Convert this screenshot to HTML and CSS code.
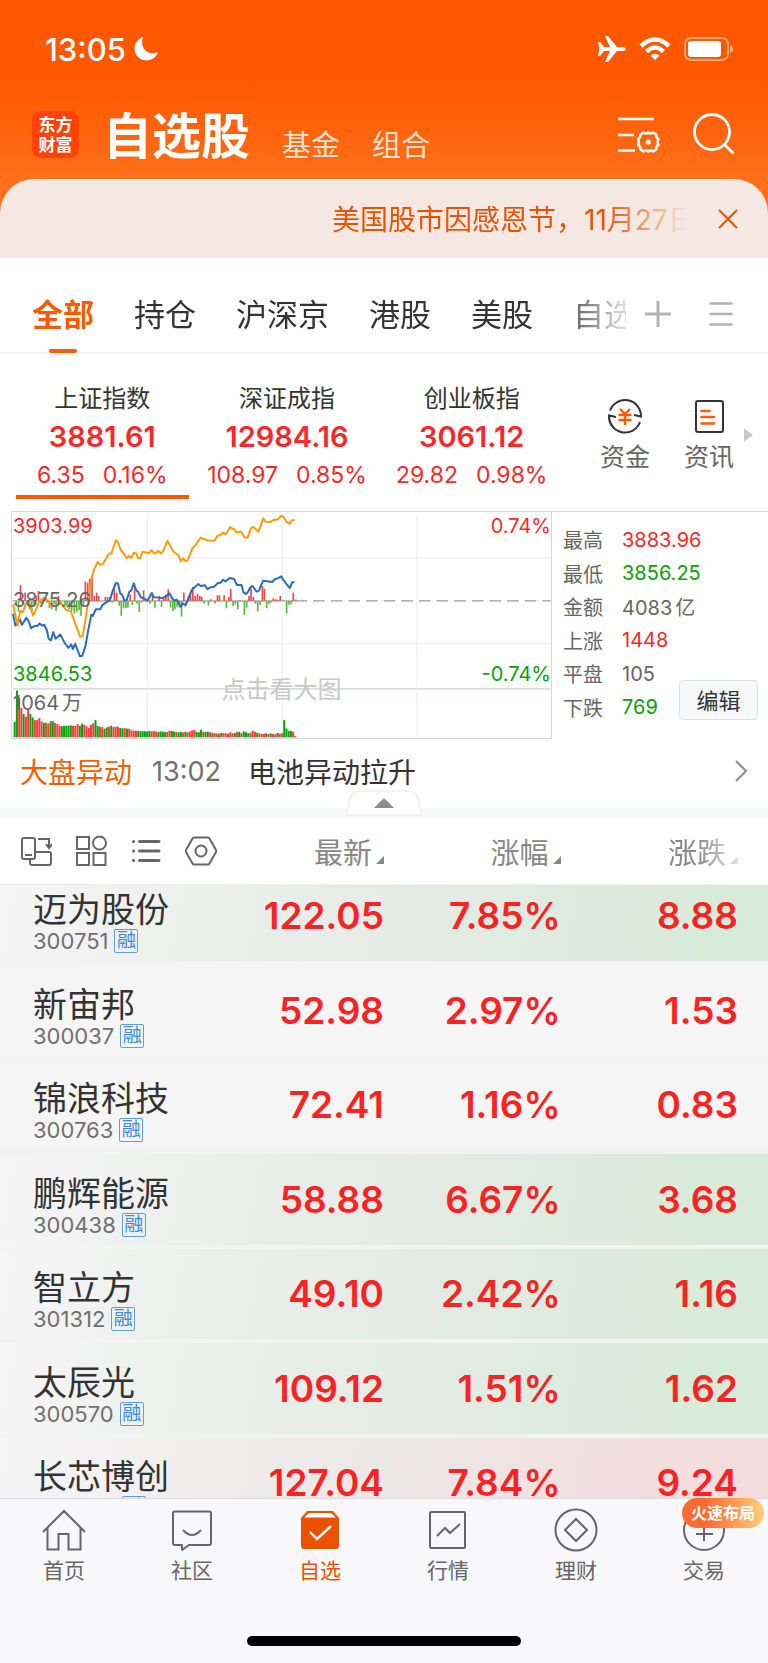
FILE: index.html
```
<!DOCTYPE html>
<html lang="zh-CN">
<head>
    <meta charset="UTF-8">
    <meta name="viewport" content="width=device-width, initial-scale=1.0">
    <title>自选股</title>
    <link rel="stylesheet" href="styles.css">
</head>
<body>
<div class="app">
    <header class="header">
        <div class="status-bar">
            <span class="clock">13:05</span>
            <svg width="24" height="24" viewBox="0 0 24 24"><path fill="#fff" d="M9 0A12 12 0 1 0 24 15C15 19 5 12 9 0z"/></svg>
            <div class="status-icons">
                <svg width="28" height="26" viewBox="0 0 28 26"><path fill="#fff" d="M0 6h2l4 5h6L7 0h3l9 11h5c5 0 5 4 0 4h-5l-9 11H7l5-11H6l-4 5H0l1.500-7z"/></svg>
                <svg width="32" height="24" viewBox="0 0 32 24">
                    <path fill="none" stroke="#fff" stroke-width="4.500" d="M2 9q14-13 28 0M7.500 14.500q8.500-8 17 0"/>
                    <path fill="#fff" d="M11.500 18.500q4.500-3.500 9 0L16 23z"/>
                </svg>
                <svg width="50" height="24" viewBox="0 0 50 24">
                    <rect x="1" y="1" width="43" height="22" rx="6" fill="none" stroke="#fff" stroke-opacity=".45" stroke-width="2"/>
                    <rect x="4" y="4" width="33" height="16" rx="3" fill="#fff"/>
                    <path fill="#fff" fill-opacity=".5" d="M46 8q3 1 3 4t-3 4z"/>
                </svg>
            </div>
        </div>

        <nav class="top-nav">
            <a class="logo" href="#">东方<br>财富</a>
            <div class="top-tabs">
                <a class="current" href="#">自选股</a>
                <a href="#">基金</a>
                <a href="#">组合</a>
            </div>
            <button class="icon-btn" aria-label="设置">
                <svg width="42" height="40" viewBox="0 0 42 40" fill="none" stroke="#fff" stroke-width="2.600">
                    <path d="M0 5h36M0 21h16M0 36.500h17"/>
                    <path stroke-linejoin="round" d="M25.500 18.500q2.500 2 4.800 0 2.300 2 4.800 0l3 2q0 3.500 2.400 4.500-1.500 3 0 6-2.400 1-2.400 4.500l-3 2q-2.500-2-4.800 0-2.300-2-4.800 0l-3-2q0-3.500-2.400-4.500 1.500-3 0-6 2.400-1 2.400-4.500z"/>
                    <circle cx="30.300" cy="28" r="2.600" fill="#fff" stroke="none"/>
                </svg>
            </button>
            <button class="icon-btn" aria-label="搜索">
                <svg width="42" height="42" viewBox="0 0 42 42" fill="none" stroke="#fff" stroke-width="2.800">
                    <circle cx="19" cy="19" r="17.500"/><path d="M31.500 31.500l9 9"/>
                </svg>
            </button>
        </nav>

        <div class="notice">
            <p>美国股市因感恩节，11月27日休市一天</p>
            <button class="icon-btn" aria-label="关闭">
                <svg width="20" height="20" viewBox="0 0 20 20" stroke="#eb5200" stroke-width="2"><path d="M1 1l18 18M19 1L1 19"/></svg>
            </button>
        </div>
    </header>

    <nav class="groups">
        <div class="group-tabs">
            <a class="current" href="#">全部</a>
            <a href="#">持仓</a>
            <a href="#">沪深京</a>
            <a href="#">港股</a>
            <a href="#">美股</a>
            <a href="#">自选</a>
        </div>
        <button class="icon-btn" aria-label="添加分组">
            <svg width="26" height="26" viewBox="0 0 26 26" stroke="#b3b3b3" stroke-width="3"><path d="M0 13h26M13 0v26"/></svg>
        </button>
        <button class="icon-btn" aria-label="管理分组">
            <svg width="24" height="26" viewBox="0 0 24 26" stroke="#b3b3b3" stroke-width="2.600" stroke-linecap="round"><path d="M1.500 2.500h21M1.500 13h21M1.500 23.500h21"/></svg>
        </button>
    </nav>

    <section class="indexes">
        <div class="index current">
            <h2>上证指数</h2>
            <strong>3881.61</strong>
            <p><span>6.35</span><span>0.16%</span></p>
        </div>
        <div class="index">
            <h2>深证成指</h2>
            <strong>12984.16</strong>
            <p><span>108.97</span><span>0.85%</span></p>
        </div>
        <div class="index">
            <h2>创业板指</h2>
            <strong>3061.12</strong>
            <p><span>29.82</span><span>0.98%</span></p>
        </div>
        <div class="shortcuts">
            <a href="#">
                <svg width="36" height="36" viewBox="0 0 36 36" fill="none" stroke="#333" stroke-width="2">
                    <path d="M3 12.500A16 16 0 0 1 34 18.500l-7-1.500M33 24A16 16 0 0 1 2 17.500l7 1.500"/>
                    <path stroke="#ff5a00" stroke-width="2.400" d="M13 11l5 5 5-5M11.500 17h13M11.500 22h13M18 16v11"/>
                </svg>
                资金
            </a>
            <a href="#">
                <svg width="36" height="36" viewBox="0 0 36 36" fill="none" stroke="#333" stroke-width="2">
                    <rect x="5" y="3" width="27" height="31" rx="2"/>
                    <path stroke="#ff5a00" stroke-width="2.600" stroke-linecap="round" d="M10.500 13h8M10.500 19h12.500M10.500 25.500h12.500"/>
                </svg>
                资讯
            </a>
            <svg class="more" width="9" height="14" viewBox="0 0 9 14"><path fill="#c8c8c8" d="M0 1q0-1 1 0l8 6-8 6q-1 1-1 0z"/></svg>
        </div>
    </section>

    <section class="market">
        <div class="chart">
            <svg id="chart" viewBox="33 33 1620 681" preserveAspectRatio="none">
                <g fill="none" stroke="#e8ebf1" stroke-width="3">
                    <path d="M440 42V558M440 571V712M845 42V558M845 571V712M1250 42V558M1250 571V712M36 172H1652M36 430H1652"/>
                    <path stroke="#dadde6" stroke-width="5" d="M36 566H1652"/>
                </g>
                <path fill="none" stroke="#888" stroke-width="3" d="M36 301H885"/>
                <path fill="none" stroke="#999" stroke-width="4" stroke-dasharray="35 18" d="M885 301H1652"/>
                <g id="flow"></g>
                <g id="volume"></g>
                <g fill="none" stroke-width="6" stroke-linejoin="round">
                    <polyline stroke="#2b6cbd" points="36,340 43,375 50,370 56,355 63,373 76,352 83,362 90,383 100,377 110,376 116,369 123,375 130,373 138,390 143,415 150,420 157,395 164,415 178,402 190,425 202,442 211,432 216,446 223,430 237,467 244,467 253,440 262,390 271,343 276,346 285,326 298,326 306,312 320,303 327,300 336,270 345,247 352,249 358,278 364,282 371,300 378,298 385,275 392,268 399,248 406,268 413,275 420,290 432,295 440,300 446,290 453,277 459,290 473,291 487,292 501,283 507,278 514,293 521,300 528,297 534,308 540,318 547,308 554,315 565,290 573,268 593,250 600,256 613,254 620,265 630,260 641,258 652,247 660,246 667,237 674,242 688,232 701,235 709,253 723,253 729,276 736,280 742,274 749,260 756,256 768,273 775,270 788,240 815,244 824,235 832,233 842,227 848,237 858,250 868,262 875,245 882,245"/>
                    <polyline stroke="#ff9a0a" points="36,312 50,375 58,330 66,335 74,310 84,305 96,345 106,325 116,300 130,292 140,300 150,315 165,318 180,305 195,328 210,332 220,360 237,408 245,408 253,365 262,300 270,240 280,205 291,183 298,192 306,190 325,158 332,158 345,118 352,126 360,148 370,160 378,172 384,165 391,172 399,156 406,158 412,172 418,172 425,153 445,157 452,148 459,157 466,157 473,150 480,158 487,152 500,120 518,152 534,164 540,182 547,172 554,181 561,178 575,143 585,132 600,110 606,113 622,119 641,120 652,103 660,103 667,95 674,100 681,93 688,78 694,83 701,84 708,95 721,92 732,110 741,110 750,84 756,78 763,82 774,93 788,52 795,62 809,64 817,58 832,55 841,45 849,47 857,62 868,68 874,58 882,58"/>
                </g>
            </svg>
            <span class="label high up">3903.99</span>
            <span class="label high right up">0.74%</span>
            <span class="label middle">3875.26</span>
            <span class="label low down">3846.53</span>
            <span class="label low right down">-0.74%</span>
            <span class="label vol">1064<span class="unit">万</span></span>
            <span class="hint">点击看大图</span>
        </div>
        <dl class="stats">
            <dt>最高</dt><dd class="up">3883.96</dd>
            <dt>最低</dt><dd class="down">3856.25</dd>
            <dt>金额</dt><dd>4083<span class="unit">亿</span></dd>
            <dt>上涨</dt><dd class="up">1448</dd>
            <dt>平盘</dt><dd>105</dd>
            <dt>下跌</dt><dd class="down">769</dd>
        </dl>
        <button class="edit">编辑</button>
    </section>

    <section class="news">
        <a class="news-tag" href="#">大盘异动</a>
        <time>13:02</time>
        <a class="news-title" href="#">电池异动拉升</a>
        <svg width="12" height="22" viewBox="0 0 12 22" fill="none" stroke="#8c8c8c" stroke-width="2"><path d="M1 1l10 10L1 21"/></svg>
        <button class="fold" aria-label="收起">
            <svg width="76" height="26" viewBox="0 0 76 26">
                <path fill="#fff" stroke="#eeeff2" stroke-width="1.500" d="M1 25L3 11Q5 1 15 1h46q10 0 12 10l2 14z"/>
                <path fill="#8c8c8c" d="M28 18L37 9q1-1 2 0l9 9z"/>
            </svg>
        </button>
    </section>

    <section class="watchlist">
        <table>
            <thead>
                <tr>
                    <th>
                        <div class="tools">
                            <button class="icon-btn" aria-label="切换横屏">
                                <svg width="32" height="32" viewBox="0 0 32 32" fill="none" stroke="#666" stroke-width="2">
                                    <rect x="2" y="3" width="13" height="21" rx="2"/>
                                    <path d="M5 20h7M18 4h11v9M26 9l3 4 3-4M10 24v4q0 2 2 2h17q2 0 2-2V19q0-2-2-2H15"/>
                                </svg>
                            </button>
                            <button class="icon-btn" aria-label="宫格">
                                <svg width="32" height="32" viewBox="0 0 32 32" fill="none" stroke="#666" stroke-width="2">
                                    <rect x="2" y="2" width="12" height="12"/><circle cx="24.500" cy="8" r="6.500"/>
                                    <rect x="2" y="18" width="12" height="12"/><rect x="18.500" y="18" width="12" height="12"/>
                                </svg>
                            </button>
                            <button class="icon-btn" aria-label="列表">
                                <svg width="32" height="32" viewBox="0 0 32 32" fill="none" stroke="#666" stroke-width="3" stroke-linecap="round">
                                    <path d="M9.500 6.500H29M9.500 16H29M9.500 25.500H29M3.500 6.500h.1M3.500 16h.1M3.500 25.500h.1"/>
                                </svg>
                            </button>
                            <button class="icon-btn" aria-label="列表设置">
                                <svg width="32" height="32" viewBox="0 0 32 32" fill="none" stroke="#666" stroke-width="2" stroke-linejoin="round">
                                    <path d="M9 2.500h14q1 0 1.500 1L31 15q.5 1 0 2l-6.500 11.500q-.5 1-1.500 1H9q-1 0-1.500-1L1 17q-.5-1 0-2L7.500 3.500q.5-1 1.500-1z"/>
                                    <circle cx="16" cy="16" r="5.500"/>
                                </svg>
                            </button>
                        </div>
                    </th>
                    <th class="sort">最新</th>
                    <th class="sort">涨幅</th>
                    <th class="sort fade">涨跌</th>
                </tr>
            </thead>
            <tbody>
                <tr class="fall">
                    <td><b>迈为股份</b><span class="code">300751<i>融</i></span></td>
                    <td>122.05</td><td>7.85%</td><td>8.88</td>
                </tr>
                <tr>
                    <td><b>新宙邦</b><span class="code">300037<i>融</i></span></td>
                    <td>52.98</td><td>2.97%</td><td>1.53</td>
                </tr>
                <tr>
                    <td><b>锦浪科技</b><span class="code">300763<i>融</i></span></td>
                    <td>72.41</td><td>1.16%</td><td>0.83</td>
                </tr>
                <tr class="fall">
                    <td><b>鹏辉能源</b><span class="code">300438<i>融</i></span></td>
                    <td>58.88</td><td>6.67%</td><td>3.68</td>
                </tr>
                <tr class="fall">
                    <td><b>智立方</b><span class="code">301312<i>融</i></span></td>
                    <td>49.10</td><td>2.42%</td><td>1.16</td>
                </tr>
                <tr class="fall">
                    <td><b>太辰光</b><span class="code">300570<i>融</i></span></td>
                    <td>109.12</td><td>1.51%</td><td>1.62</td>
                </tr>
                <tr class="rise">
                    <td><b>长芯博创</b><span class="code">300548<i>融</i></span></td>
                    <td>127.04</td><td>7.84%</td><td>9.24</td>
                </tr>
            </tbody>
        </table>
    </section>

    <footer class="tab-bar">
        <nav>
            <a href="#">
                <svg width="46" height="44" viewBox="0 0 46 44" fill="none" stroke="#666" stroke-width="2">
                    <path d="M2 24L23 3l21 21M6.500 20v21.500h11V26h10v15.500h12V20"/>
                </svg>
                首页
            </a>
            <a href="#">
                <svg width="46" height="44" viewBox="0 0 46 44" fill="none" stroke="#666" stroke-width="2" stroke-linejoin="round">
                    <path d="M6 3.500h34q2 0 2 2V35q0 2-2 2H20l-7 5v-5H6q-2 0-2-2V5.500q0-2 2-2zM14 22q9 10 18 0"/>
                </svg>
                社区
            </a>
            <a class="current" href="#">
                <svg width="46" height="44" viewBox="0 0 46 44">
                    <path fill="#eb5200" d="M10 3h26l6 7v28q0 3-3 3H7q-3 0-3-3V10z"/>
                    <path fill="#fff" d="M12 5h22l5 4.500H7z"/>
                    <path fill="none" stroke="#fff" stroke-width="2.400" d="M13 24l7 7 14-13"/>
                </svg>
                自选
            </a>
            <a href="#">
                <svg width="46" height="44" viewBox="0 0 46 44" fill="none" stroke="#666" stroke-width="2">
                    <rect x="5" y="4" width="35" height="36" rx="1"/><path d="M12 28l8-8 5 5 10-9"/>
                </svg>
                行情
            </a>
            <a href="#">
                <svg width="46" height="44" viewBox="0 0 46 44" fill="none" stroke="#666" stroke-width="2">
                    <circle cx="23" cy="22" r="20.500"/><path d="M23 11l11 11-11 11-11-11z"/>
                </svg>
                理财
            </a>
            <a href="#">
                <svg width="46" height="44" viewBox="0 0 46 44" fill="none" stroke="#666" stroke-width="2">
                    <circle cx="23" cy="22" r="20"/><path d="M15 26h17M23 18v15"/>
                </svg>
                交易
                <span class="badge">火速布局</span>
            </a>
        </nav>
        <div class="home-indicator"></div>
    </footer>
</div>

<script>
    const RED = '#fa3c3c', GREEN = '#0aa00a';

    // one bar per minute, sign gives the colour: above zero is red
    const volume = [-47, -141, 118, 88, -70, 62, 84, -70, -60, 52, 52, 58, 48, -44, 44, 42, -48, -49, 43, 40, 34, -33,
        -35, -35, -35, -36, 35, 34, 40, -35, -41, 38, 33, 28, 38, 42, -52, -34, 32, 31, -26, -30, 32, -35, 31, 32, 32,
        -28, -27, 28, -26, 26, 21, 20, 20, -19, -18, -19, -18, -18, -19, 18, 19, 17, -16, -18, -17, -16, 17, 20, -19,
        -17, 16, -15, -17, 15, -17, 15, 18, 21, 22, -17, -15, -23, 17, -16, -17, 15, 14, -12, 12, 11, -13, 13, 12, 11,
        15, 12, -13, 16, -17, 12, -18, -15, -12, 14, 20, 17, -14, 12, 11, 10, -12, 10, -12, 10, 9, -13, 11, 12,
        -52, -27, -20, -19, 17, 4];

    // [x, height] around the zero line
    const flow = [[45, -12], [52, -32], [58, 48], [65, -10], [72, 25], [79, -12], [85, -25], [92, -30], [99, -14],
        [105, 15], [112, 30], [119, -8], [126, 10], [139, -6], [145, -22], [152, -25], [159, -10], [165, -30], [172, 15],
        [179, -12], [192, -14], [198, -20], [205, -25], [212, -30], [220, -38], [227, -33], [234, -28], [240, -45],
        [247, -12], [253, 58], [260, 55], [266, 66], [273, 75], [280, 15], [287, 25], [293, 15], [313, 12], [320, 12],
        [327, 12], [333, -5], [340, 45], [347, 25], [355, -15], [361, -45], [368, -22], [375, -22], [381, -20],
        [388, 20], [394, -12], [401, 40], [408, -8], [415, -33], [422, -5], [428, 32], [435, 5], [447, -8], [455, 18],
        [462, -20], [475, 15], [482, -18], [488, 12], [495, 20], [502, 35], [509, -20], [516, -30], [522, -25],
        [529, -18], [536, -20], [542, -47], [549, 25], [556, -10], [563, 15], [569, 25], [576, 42], [583, 15],
        [590, 22], [597, 15], [603, 12], [610, -8], [623, -14], [630, 5], [643, -8], [650, 17], [656, 17], [670, 17],
        [677, -22], [684, 12], [690, 36], [697, -15], [704, -10], [711, -25], [718, 3], [731, -42], [738, -20],
        [745, 15], [751, 38], [758, 12], [764, -8], [771, -32], [778, -12], [785, 45], [791, 36], [798, -22],
        [805, -10], [811, -5], [818, 8], [825, 5], [832, 4], [839, 15], [858, -38], [865, -12], [872, -10], [878, 25],
        [885, 4]];

    function bar(x, y, w, h, color) {
        return `<rect x="${x}" y="${y}" width="${w}" height="${h}" fill="${color}"/>`;
    }

    document.getElementById('volume').innerHTML = volume
        .map((v, i) => bar(38 + i * 6.75, 712 - Math.abs(v), 6, Math.abs(v), v > 0 ? RED : GREEN))
        .join('');

    document.getElementById('flow').innerHTML = flow
        .map(([x, v]) => bar(x - 2, v > 0 ? 301 - v : 301, 5, Math.abs(v), v > 0 ? '#f04848' : '#58b83c'))
        .join('');
</script>
</body>
</html>
```
FILE: styles.css
```
* {
    box-sizing: border-box;
}
body {
    margin: 0;
    font-family: Inter, "Noto Sans CJK SC", sans-serif;
    color: #333;
    background: #fff;
}
h2, p, dl, dd {
    margin: 0;
}
a {
    color: inherit;
    text-decoration: none;
}
svg {
    display: block;
    flex: none;
}
button {
    font-family: inherit;
}
.icon-btn {
    padding: 0;
    border: none;
    background: none;
    cursor: pointer;
}
.up { color: #fa2828; }
.down { color: #0aa00a; }

.app {
    display: flex;
    flex-direction: column;
    height: 100vh;
}

/* header */
.header {
    flex: none;
    background: linear-gradient(#ff5800 80px, #ff6f19 180px);
    color: #fff;
}
.status-bar {
    display: flex;
    align-items: center;
    height: 98px;
    padding: 0 34px 0 45px;
}
.clock {
    margin-right: 8px;
    font-size: 31px;
    font-weight: 500;
}
.status-icons {
    display: flex;
    align-items: center;
    gap: 13px;
    margin-left: auto;
}
.top-nav {
    display: flex;
    align-items: center;
    height: 72px;
    margin-bottom: 9px;
    padding: 0 33px 0 32px;
}
.logo {
    width: 47px;
    height: 47px;
    padding-top: 4px;
    border-radius: 9px;
    background: #ff4208;
    font-size: 17px;
    font-weight: 700;
    line-height: 20px;
    text-align: center;
}
.top-tabs {
    display: flex;
    flex: 1;
    align-items: flex-end;
    gap: 32px;
    margin: 5px 0 0 24px;
    font-size: 29px;
    line-height: 42px;
    color: #ffdfcc;
}
.top-tabs .current {
    font-size: 49px;
    font-weight: 700;
    line-height: 60px;
    color: #fff;
}
.top-nav .icon-btn + .icon-btn {
    margin-left: 33px;
}
.notice {
    display: flex;
    align-items: center;
    height: 79px;
    padding-right: 30px;
    border-radius: 34px 34px 0 0;
    background: #f5e8e3;
}
.notice p {
    flex: 1;
    overflow: hidden;
    margin: 0 31px 2px 0;
    padding-left: 332px;
    font-size: 28px;
    color: #eb5200;
    white-space: nowrap;
    -webkit-mask-image: linear-gradient(90deg, #000 88%, transparent 100%);
    mask-image: linear-gradient(90deg, #000 88%, transparent 100%);
}

/* group tabs */
.groups {
    display: flex;
    flex: none;
    align-items: center;
    height: 96px;
    padding: 0 35px 0 32px;
    border-bottom: 2px solid #f4f4f4;
}
.groups .icon-btn {
    margin-top: 17px;
}
.groups .icon-btn + .icon-btn {
    margin-left: 38px;
}
.group-tabs {
    display: flex;
    flex: 1;
    gap: 40px;
    overflow: hidden;
    height: 96px;
    margin-right: 19px;
    padding-top: 22px;
    font-size: 31px;
    line-height: 72px;
    white-space: nowrap;
    -webkit-mask-image: linear-gradient(90deg, #000 88%, transparent 102%);
    mask-image: linear-gradient(90deg, #000 88%, transparent 102%);
}
.group-tabs .current {
    font-weight: 700;
    color: #ff5a00;
}
.group-tabs .current::after {
    content: "";
    display: block;
    width: 28px;
    height: 4px;
    margin: -2px auto 0;
    border-radius: 2px;
    background: #ff5a00;
}

/* indexes */
.indexes {
    display: flex;
    flex: none;
    padding: 26px 0 12px 10px;
}
.index {
    flex: 1;
    margin: 0 6px;
    padding-bottom: 2px;
    border-bottom: 4px solid transparent;
    text-align: center;
    color: #fa2828;
}
.index.current {
    border-color: #ff5a00;
}
.index h2 {
    font-size: 24px;
    font-weight: 400;
    line-height: 37px;
    color: #333;
}
.index strong {
    display: block;
    font-size: 29px;
    font-weight: 600;
    line-height: 40px;
}
.index p {
    display: flex;
    justify-content: center;
    gap: 18px;
    font-size: 23px;
    line-height: 36px;
}
.shortcuts {
    display: flex;
    align-items: flex-start;
    width: 204px;
    padding: 18px 0 0 19px;
}
.shortcuts a {
    display: flex;
    flex-direction: column;
    align-items: center;
    gap: 5px;
    width: 84px;
    font-size: 25px;
    line-height: 36px;
    color: #666;
}
.more {
    margin: 30px 0 0 -7px;
}

/* chart and its figures */
.market {
    position: relative;
    display: flex;
    flex: none;
    margin-left: 11px;
    border-top: 1px solid #d5d8e0;
    font-size: 20px;
    color: #666;
}
.chart {
    position: relative;
    flex: 1;
    border: 1px solid #d5d8e0;
    border-top: none;
}
.chart svg {
    width: 100%;
    height: 226px;
}
.label {
    position: absolute;
    left: 1px;
    line-height: 24px;
}
.label.right {
    right: 0;
    left: auto;
}
.label.high { top: 2px; }
.label.middle { top: 76px; }
.label.low { bottom: 52px; }
.label.vol { bottom: 23px; }
.unit {
    margin-left: 3px;
}
.hint {
    position: absolute;
    bottom: 33px;
    width: 100%;
    font-size: 24px;
    text-align: center;
    color: #c8c8c8;
}
.stats {
    display: grid;
    grid-template-columns: 59px 1fr;
    grid-auto-rows: 1fr;
    align-items: center;
    width: 216px;
    padding: 11px 0 15px 11px;
}
.edit {
    position: absolute;
    right: 10px;
    bottom: 19px;
    width: 79px;
    height: 40px;
    padding: 0 0 3px;
    border: 1px solid #dcdee4;
    border-radius: 4px;
    background: #f7f8fa;
    font-size: 22px;
    color: #333;
}

/* news */
.news {
    position: relative;
    display: flex;
    flex: none;
    align-items: center;
    height: 79px;
    padding: 0 21px 6px 20px;
    border-bottom: 10px solid #f6f7fa;
    font-size: 28px;
}
.news-tag {
    color: #f06000;
}
.news time {
    margin: 0 27px 0 20px;
    padding-top: 2px;
    font-size: 27px;
    color: #707070;
}
.news-title {
    flex: 1;
}
.fold {
    position: absolute;
    bottom: -8px;
    left: 50%;
    margin-left: -38px;
    padding: 0;
    border: none;
    background: none;
}

/* watch list */
.watchlist {
    flex: 1;
    overflow: hidden;
    min-height: 0;
    background: #f5f5f5;
}
.watchlist table {
    width: 100%;
    border-spacing: 0;
    table-layout: fixed;
}
.watchlist thead {
    background: #fff;
}
.watchlist th {
    width: 23%;
    height: 67px;
    padding: 0;
    border-bottom: 1px solid #eee;
    font-size: 29px;
    font-weight: 400;
    text-align: right;
    color: #888;
}
.watchlist th:first-child,
.watchlist th:last-child {
    width: 27%;
}
.tools {
    display: flex;
    gap: 23px;
    padding-left: 20px;
}
.sort::after {
    content: "";
    display: inline-block;
    margin-left: 4px;
    border-bottom: 8px solid #888;
    border-left: 8px solid transparent;
}
.fade {
    -webkit-mask-image: linear-gradient(90deg, #000 65%, transparent 92%);
    mask-image: linear-gradient(90deg, #000 65%, transparent 92%);
}
.watchlist th:last-child,
.watchlist td:last-child {
    padding-right: 30px;
}
.watchlist td {
    height: 94px;
    padding: 0 0 17px;
    border-bottom: 4px solid #f3f3f3;
    font-size: 37px;
    font-weight: 600;
    line-height: 56px;
    text-align: right;
    vertical-align: bottom;
    color: #fa2323;
}
.watchlist tr:nth-child(even) td {
    height: 95px;
}
/* the first row is scrolled partly under the head */
.watchlist tbody tr:first-child td {
    height: 80px;
}
.watchlist td:first-child {
    padding: 0 0 8px 33px;
    font-weight: 400;
    text-align: left;
    white-space: nowrap;
    color: #333;
}
.watchlist b {
    display: block;
    font-size: 34px;
    font-weight: 400;
    line-height: 38px;
}
.code {
    display: flex;
    align-items: center;
    gap: 6px;
    font-size: 22px;
    line-height: 24px;
    color: #707070;
}
.code i {
    width: 24px;
    height: 24px;
    border: 1px solid #5c9de6;
    border-radius: 2px;
    font-size: 19px;
    font-style: normal;
    line-height: 22px;
    text-align: center;
    color: #3d8ae0;
}
.fall {
    background: linear-gradient(100deg, #f5f5f5, #e5ebe6 50%, #d7ebd8 95%);
}
.rise {
    background: linear-gradient(100deg, #f5f5f5, #ede6e6 50%, #f5dcdc 95%);
}

/* bottom tabs */
.tab-bar {
    flex: none;
    height: 165px;
    padding-top: 9px;
    border-top: 1px solid #d9dbe3;
    background: #f8f8fb;
}
.tab-bar nav {
    display: flex;
}
.tab-bar a {
    position: relative;
    display: flex;
    flex: 1;
    flex-direction: column;
    align-items: center;
    gap: 4px;
    font-size: 21px;
    line-height: 30px;
    color: #666;
}
.tab-bar .current {
    color: #eb5200;
}
.badge {
    position: absolute;
    top: -10px;
    right: 4px;
    width: 82px;
    border-radius: 15px;
    background: linear-gradient(90deg, #ff6a35 30%, #ffd078);
    font-size: 16px;
    font-weight: 700;
    text-align: center;
    color: #fff;
}
.home-indicator {
    width: 274px;
    height: 10px;
    margin: 50px auto 0;
    border-radius: 5px;
    background: #000;
}
```
